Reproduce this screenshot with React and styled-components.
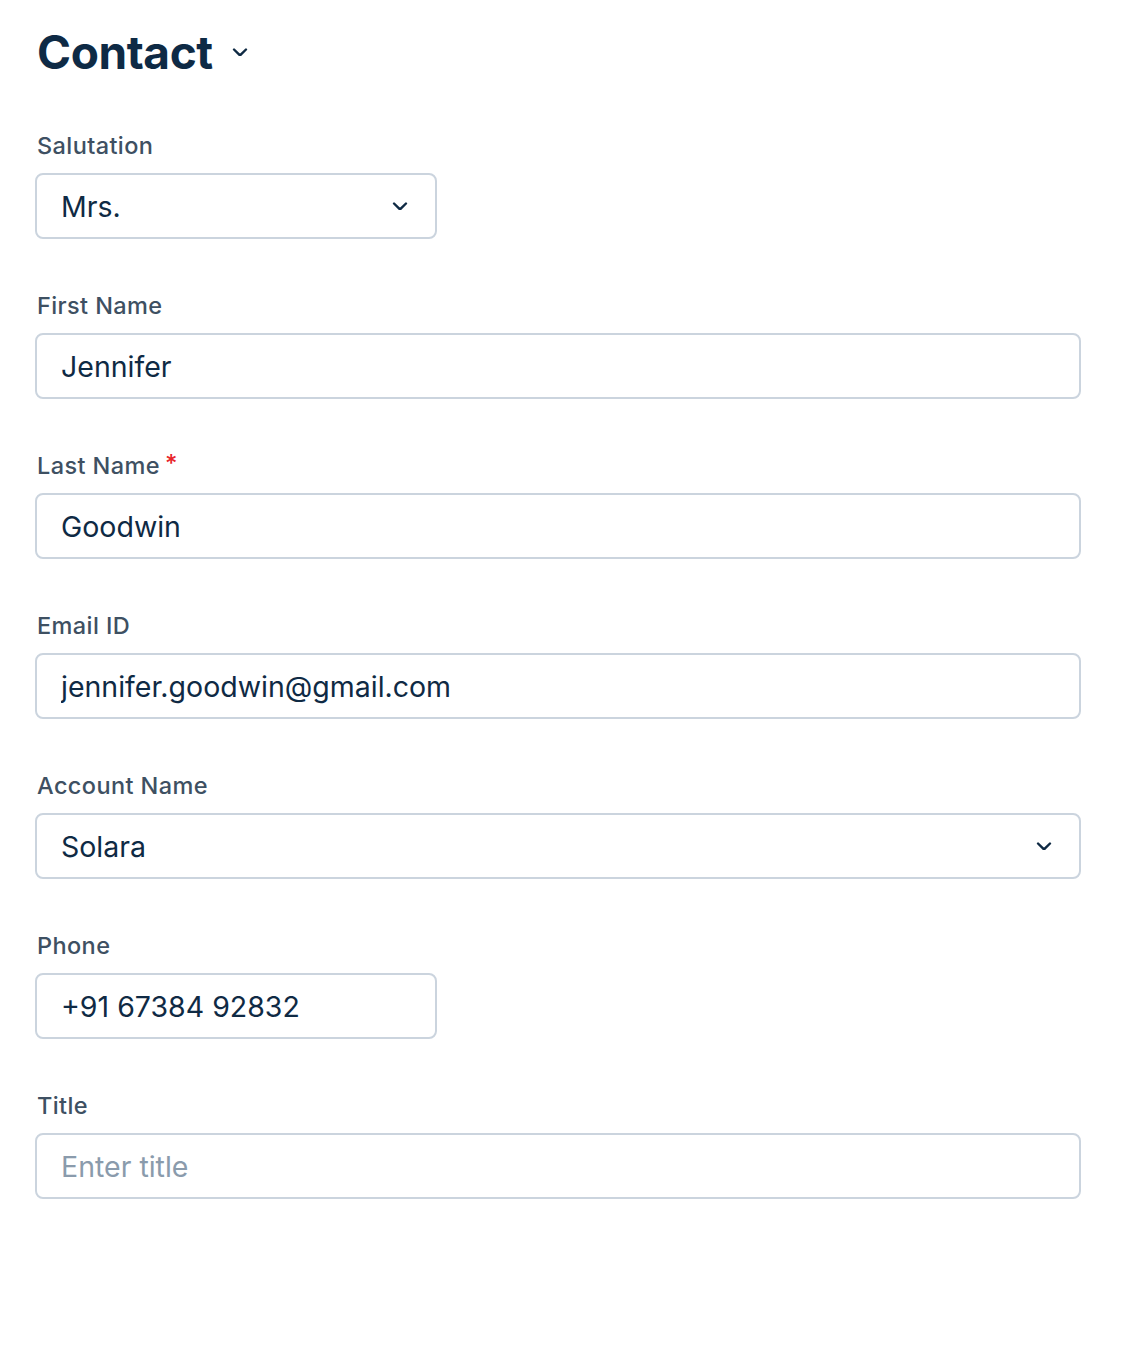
import React from 'react';
import styled, { createGlobalStyle } from 'styled-components';

const GlobalStyle = createGlobalStyle`
  body {
    margin: 0;
    background: #ffffff;
    font-family: Inter, "Noto Sans", sans-serif;
  }
`;

const Page = styled.div`
  width: 1046px;
  padding: 24px 0 0 35px;
`;

const Heading = styled.div`
  display: flex;
  align-items: center;
  gap: 19px;
  height: 56px;
  margin: 0 0 52px 2px;

  h1 {
    margin: 0;
    font-size: 46px;
    font-weight: 700;
    letter-spacing: -0.4px;
    color: #0e2a45;
  }
`;

const Form = styled.div`
  display: flex;
  flex-direction: column;
  gap: 53px;
`;

const Field = styled.div`
  display: flex;
  flex-direction: column;
  gap: 13px;
`;

const Label = styled.label`
  display: flex;
  align-items: flex-start;
  height: 28px;
  line-height: 28px;
  padding-left: 2px;
  font-size: 23.5px;
  font-weight: 500;
  letter-spacing: 0.4px;
  color: #3e5062;

  span {
    margin-left: 5px;
    margin-top: 3px;
    line-height: 18px;
    font-size: 24px;
    color: #e8252b;
  }
`;

const Box = styled.div`
  box-sizing: border-box;
  display: flex;
  align-items: center;
  justify-content: space-between;
  width: ${(p) => (p.$half ? '402px' : '1046px')};
  height: 66px;
  padding: 0 27px 0 24px;
  border: 2px solid #cbd4de;
  border-radius: 8px;
  background: #ffffff;
`;

const Value = styled.input`
  flex: 1;
  min-width: 0;
  border: none;
  outline: none;
  padding: 0;
  background: transparent;
  font-family: Inter, "Noto Sans", sans-serif;
  font-size: 28.5px;
  color: #0f2a44;

  &::placeholder {
    color: #8a9bac;
  }
`;

const Chevron = ({ size = 16 }) => (
  <svg width={size} height={size * 0.56} viewBox="0 0 16 9" fill="none">
    <path d="M2 1.5 L8 7.5 L14 1.5" stroke="#0f2a44" strokeWidth="2.4" strokeLinecap="round" strokeLinejoin="round" />
  </svg>
);

const fields = [
  { label: 'Salutation', value: 'Mrs.', half: true, select: true },
  { label: 'First Name', value: 'Jennifer' },
  { label: 'Last Name', value: 'Goodwin', required: true },
  { label: 'Email ID', value: 'jennifer.goodwin@gmail.com' },
  { label: 'Account Name', value: 'Solara', select: true },
  { label: 'Phone', value: '+91 67384 92832', half: true },
  { label: 'Title', value: '', placeholder: 'Enter title' },
];

const App = () => (
  <>
    <GlobalStyle />
    <Page>
      <Heading>
        <h1>Contact</h1>
        <Chevron />
      </Heading>
      <Form>
        {fields.map((f) => (
          <Field key={f.label}>
            <Label>
              {f.label}
              {f.required && <span>*</span>}
            </Label>
            <Box $half={f.half}>
              <Value readOnly defaultValue={f.value} placeholder={f.placeholder} />
              {f.select && <Chevron />}
            </Box>
          </Field>
        ))}
      </Form>
    </Page>
  </>
);

export default App;
